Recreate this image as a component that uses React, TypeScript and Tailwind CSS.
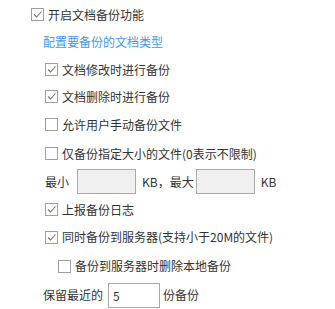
import React from "react";

function Check({ checked }: { checked?: boolean }) {
  return (
    <span className="flex h-[13px] w-[13px] shrink-0 items-center justify-center border border-[#a0a0a0] bg-white">
      {checked && (
        <svg width="11" height="11" viewBox="0 0 11 11" fill="none">
          <path d="M2 5.5 L4.5 8 L9.5 2.5" stroke="#777" strokeWidth="1.1" />
        </svg>
      )}
    </span>
  );
}

function Row({ checked, label, h, indent }: { checked?: boolean; label: string; h: string; indent: string }) {
  return (
    <div className={`flex items-center gap-[4px] ${h} ${indent}`}>
      <Check checked={checked} />
      <span>{label}</span>
    </div>
  );
}

export default function App() {
  return (
    <div
      className="flex h-[309px] w-[335px] flex-col bg-white pt-[1px] text-[12px] text-[#333]"
      style={{ fontFamily: '"Microsoft YaHei", "Noto Sans CJK SC", sans-serif' }}
    >
      <Row checked label="开启文档备份功能" h="h-[28px]" indent="pl-[31px]" />
      <div className="flex h-[27px] items-center pl-[43px] text-[#3d9bf0]">配置要备份的文档类型</div>
      <Row checked label="文档修改时进行备份" h="h-[28px]" indent="pl-[45px]" />
      <Row checked label="文档删除时进行备份" h="h-[27px]" indent="pl-[45px]" />
      <Row label="允许用户手动备份文件" h="h-[29px]" indent="pl-[45px]" />
      <Row label="仅备份指定大小的文件(0表示不限制)" h="h-[29px]" indent="pl-[45px]" />
      <div className="flex h-[28px] items-center pl-[45px]">
        <span>最小</span>
        <input className="ml-[8px] h-[25px] w-[59px] border border-[#aaa] bg-[#f0f0f0] outline-none" />
        <span className="ml-[6px]">KB，最大</span>
        <input className="ml-[2px] h-[25px] w-[59px] border border-[#aaa] bg-[#f0f0f0] outline-none" />
        <span className="ml-[6px]">KB</span>
      </div>
      <Row checked label="上报备份日志" h="h-[28px]" indent="pl-[45px]" />
      <Row checked label="同时备份到服务器(支持小于20M的文件)" h="h-[28px]" indent="pl-[45px]" />
      <Row label="备份到服务器时删除本地备份" h="h-[30px]" indent="pl-[58px]" />
      <div className="flex h-[28px] items-center pl-[43px]">
        <span>保留最近的</span>
        <input
          defaultValue="5"
          className="ml-[5px] h-[25px] w-[52px] border border-[#aaa] bg-white px-[4px] text-[12px] text-[#333] outline-none"
        />
        <span className="ml-[3px]">份备份</span>
      </div>
    </div>
  );
}
